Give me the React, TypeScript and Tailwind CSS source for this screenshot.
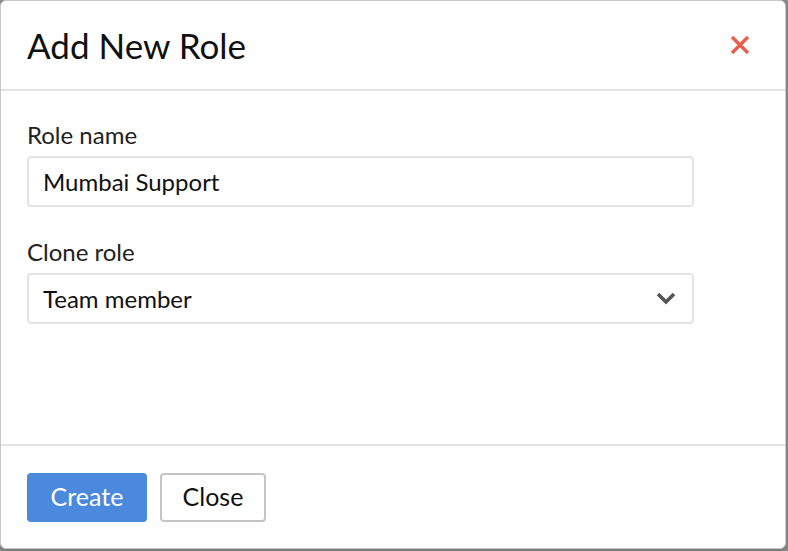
export default function App() {
  return (
    <div className="h-[551px] w-[788px] bg-[#8a8a8a] font-['Lato',sans-serif]">
      <div className="flex h-[549px] w-[786px] flex-col rounded-md border border-[#c8c8c8] bg-white shadow-md">
        {/* Header */}
        <div className="flex h-[90px] items-center justify-between border-b-2 border-[#e3e3e3] pl-[26px] pr-[35px]">
          <h2 className="text-[35px] leading-none text-[#111]">Add New Role</h2>
          <button type="button" className="text-[#e8604c]">
            <svg width="20" height="20" viewBox="0 0 20 20" fill="none" stroke="currentColor" strokeWidth="3.4">
              <path d="M2 2L18 18M18 2L2 18" />
            </svg>
          </button>
        </div>

        {/* Body */}
        <div className="flex-1 px-[26px] pt-[32px]">
          <label className="block text-[24px] leading-none text-[#222]">Role name</label>
          <input
            type="text"
            defaultValue="Mumbai Support"
            className="mt-[9px] h-[51px] w-[667px] rounded border-2 border-[#e4e4e4] px-[14px] text-[24px] text-[#111] outline-none"
          />
          <label className="mt-[33px] block text-[24px] leading-none text-[#222]">Clone role</label>
          <div className="mt-[9px] flex h-[51px] w-[667px] items-center justify-between rounded border-2 border-[#e4e4e4] pl-[14px] pr-[16px]">
            <span className="text-[24px] text-[#111]">Team member</span>
            <svg width="20" height="13" viewBox="0 0 20 13" fill="none" stroke="#555" strokeWidth="3.6">
              <path d="M2 2L10 10L18 2" />
            </svg>
          </div>
        </div>

        {/* Footer */}
        <div className="flex h-[104px] items-center gap-[13px] border-t-2 border-[#e3e3e3] px-[26px]">
          <button type="button" className="h-[49px] w-[120px] rounded bg-[#4a89dc] text-[25px] text-white">
            Create
          </button>
          <button type="button" className="h-[49px] w-[106px] rounded border-2 border-[#c4c4c4] bg-white text-[25px] text-[#111]">
            Close
          </button>
        </div>
      </div>
    </div>
  );
}
